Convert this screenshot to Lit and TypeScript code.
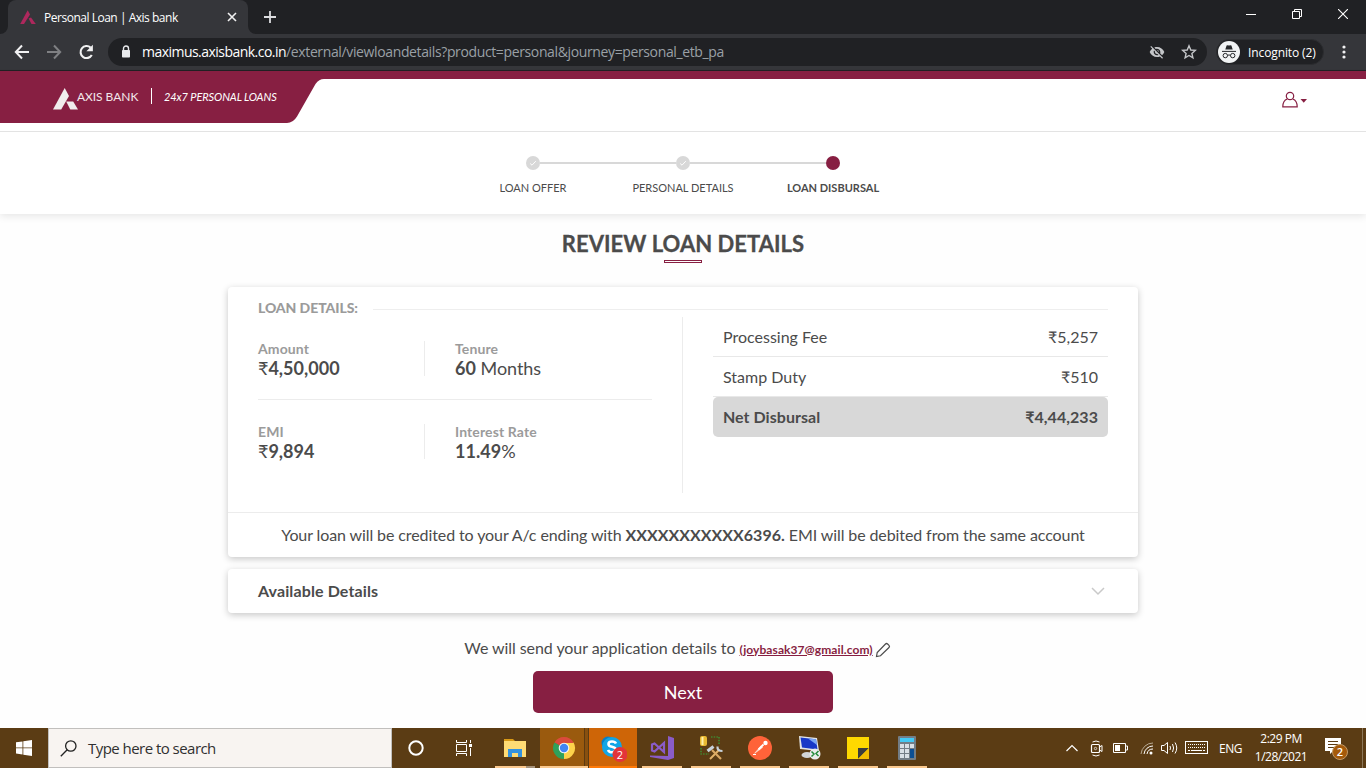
import { LitElement, html, css, svg } from "lit";
import { customElement } from "lit/decorators.js";
import { classMap } from "lit/directives/class-map.js";

@customElement("browser-chrome")
class BrowserChrome extends LitElement {
  static styles = css`
    :host { display: block; font-family: "Open Sans", sans-serif; color: #fff; }
    svg { display: block; flex: none; }
    .tabs { height: 34px; background: #202124; display: flex; align-items: center; }
    .corner { width: 8px; height: 34px; align-self: stretch; }
    .tab { width: 240px; height: 34px; box-sizing: border-box; background: #35363a; border-radius: 8px 8px 0 0; display: flex; align-items: center; padding: 0 10px 0 12px; font-size: 12px; }
    .tab-title { flex: 1; padding-left: 8px; letter-spacing: -0.48px; white-space: nowrap; }
    .plus { margin-left: 7px; }
    .grow { flex: 1; }
    .win { display: flex; gap: 36px; padding-right: 18px; align-items: center; margin-top: -6px; }
    .bar { height: 36px; background: #35363a; border-bottom: 1px solid #202124; display: flex; align-items: center; padding-left: 14px; }
    .fwd { margin-left: 16px; }
    .reload { margin-left: 16px; }
    .url { margin-left: 13px; width: 1099px; height: 28px; box-sizing: border-box; border-radius: 14px; background: #202124; display: flex; align-items: center; padding: 0 10px 0 12px; font-size: 14px; color: #9aa0a6; }
    .addr { margin: -1px 0 0 10px; white-space: nowrap; letter-spacing: -0.37px; }
    .host { color: #fff; letter-spacing: -0.53px; }
    .star { margin-left: 16px; }
    .incog { margin-left: 9px; width: 108px; height: 26px; box-sizing: border-box; border-radius: 13px; background: #202124; border: 1px solid #2c2d30; display: flex; align-items: center; padding-left: 1px; font-size: 12px; white-space: nowrap; }
    .incog-text { margin-left: 8px; letter-spacing: -0.11px; }
    .dots { margin-left: 17px; }
  `;
  render() {
    return html`
      <div class="tabs">
        <svg class="corner" viewBox="0 0 8 34"><path d="M8 26V34H0A8 8 0 0 0 8 26Z" fill="#35363a"/></svg>
        <div class="tab">
          <svg width="16" height="16" viewBox="0 0 16 16" fill="#ae285d"><path d="M7.7 1.2L10 5.6 4 15H.2Z"/><path d="M8.6 9.6L11 8.6 15.8 15H11.5Z"/></svg>
          <span class="tab-title">Personal Loan | Axis bank</span>
          <svg width="12" height="12" viewBox="0 0 12 12"><path d="M2 2L10 10M10 2L2 10" stroke="#f1f1f1" stroke-width="1.6"/></svg>
        </div>
        <svg width="8" height="34" viewBox="0 0 8 34"><path d="M0 26V34H8A8 8 0 0 1 0 26Z" fill="#35363a"/></svg>
        <svg class="plus" width="14" height="14" viewBox="0 0 14 14"><path d="M7 1V13M1 7H13" stroke="#dcdde0" stroke-width="1.8"/></svg>
        <span class="grow"></span>
        <div class="win">
          <svg width="10" height="10" viewBox="0 0 10 10"><path d="M0 5.5H10" stroke="#fff"/></svg>
          <svg width="10" height="10" viewBox="0 0 10 10"><path d="M.5 2.5H7.5V9.5H.5ZM2.5 2.5V.5H9.5V7.5H7.5" fill="none" stroke="#fff"/></svg>
          <svg width="10" height="10" viewBox="0 0 10 10"><path d="M0 0L10 10M10 0L0 10" stroke="#fff" stroke-width="1.1"/></svg>
        </div>
      </div>
      <div class="bar">
        <svg width="16" height="16" viewBox="0 0 16 16"><path d="M15 8H2M8 1.5L1.8 8L8 14.5" fill="none" stroke="#f1f1f2" stroke-width="2"/></svg>
        <svg class="fwd" width="16" height="16" viewBox="0 0 16 16"><path d="M1 8H14M8 1.5L14.2 8L8 14.5" fill="none" stroke="#7f8083" stroke-width="2"/></svg>
        <svg class="reload" width="17" height="16" viewBox="0 0 17 16"><path d="M13.8 11A6 6 0 1 1 12.6 3.6" fill="none" stroke="#f1f1f2" stroke-width="2.1"/><path d="M14.9 .8V7.2H8.4Z" fill="#f1f1f2"/></svg>
        <div class="url">
          <svg width="12" height="14" viewBox="0 0 12 14"><path d="M3.5 6V3.5A2.5 2.5 0 0 1 8.5 3.5V6" fill="none" stroke="#e8eaed" stroke-width="1.4"/><rect x="2" y="5" width="8" height="7.6" rx=".8" fill="#e8eaed"/></svg>
          <span class="addr"><span class="host">maximus.axisbank.co.in</span>/external/viewloandetails?product=personal&amp;journey=personal_etb_pa</span>
          <span class="grow"></span>
          <svg width="16" height="16" viewBox="0 0 24 24" fill="#c4c6c9"><path d="M12 7c2.76 0 5 2.24 5 5 0 .65-.13 1.26-.36 1.83l2.92 2.92c1.51-1.26 2.7-2.89 3.43-4.75-1.73-4.39-6-7.5-11-7.5-1.4 0-2.74.25-3.98.7l2.16 2.16C10.740 7.130 11.350 7 12 7zM2 4.270l2.280 2.280.46.46C3.080 8.300 1.780 10.020 1 12c1.730 4.390 6 7.500 11 7.500 1.550 0 3.030-.3 4.380-.84l.42.42L19.730 22 21 20.730 3.270 3 2 4.270zM7.530 9.800l1.550 1.550c-.05.21-.08.43-.08.65 0 1.660 1.340 3 3 3 .22 0 .44-.03.65-.08l1.550 1.550c-.67.33-1.410.53-2.200.53-2.760 0-5-2.240-5-5 0-.79.2-1.530.53-2.200zm4.310-.78l3.150 3.150.02-.16c0-1.660-1.340-3-3-3l-.17.01z"/></svg>
          <svg class="star" width="16" height="16" viewBox="0 0 16 16"><path d="M8 1.8L9.800 6 14.300 6.400 10.900 9.400 11.900 13.800 8 11.500 4.100 13.800 5.100 9.400 1.700 6.400 6.200 6Z" fill="none" stroke="#c4c6c9" stroke-width="1.4"/></svg>
        </div>
        <div class="incog">
          <svg width="22" height="22" viewBox="0 0 22 22"><circle cx="11" cy="11" r="11" fill="#f1f3f4"/><path d="M7.300 8.500L8.600 4.600Q9 4 11 4.500 13 4 13.400 4.600L14.700 8.500Z" fill="#26282b"/><path d="M4 10.400H18M9.500 14.400Q11 13.400 12.500 14.400" stroke="#26282b" fill="none"/><circle cx="7.300" cy="14.600" r="2.200" fill="none" stroke="#26282b"/><circle cx="14.700" cy="14.600" r="2.200" fill="none" stroke="#26282b"/></svg>
          <span class="incog-text">Incognito (2)</span>
        </div>
        <svg class="dots" width="6" height="16" viewBox="0 0 6 16" fill="#f1f1f2"><circle cx="3" cy="3" r="1.600"/><circle cx="3" cy="8" r="1.600"/><circle cx="3" cy="13" r="1.600"/></svg>
      </div>`;
  }
}

@customElement("bank-header")
class BankHeader extends LitElement {
  static styles = css`
    :host { display: block; font-family: Lato, sans-serif; }
    svg { display: block; flex: none; }
    .head { height: 60px; border-bottom: 1px solid #e3e3e3; display: grid; background: #fff; box-shadow: 0 1px 4px rgba(0,0,0,.06); }
    .shape, .content { grid-area: 1 / 1; }
    .content { height: 52px; display: flex; align-items: center; color: #fff; padding-left: 53px; }
    .logo { margin-top: 3px; }
    .brand { font-size: 12px; line-height: 16px; letter-spacing: -.05px; color: #f3e6eb; margin-left: -1px; width: 62px; white-space: nowrap; }
    .sep { width: 1px; height: 16px; background: #fff; margin-left: 12px; margin-top: -2px; }
    .tag { margin: -1px 0 0 12px; font-size: 11px; font-style: italic; letter-spacing: -.1px; white-space: nowrap; }
    .grow { flex: 1; }
    .user { margin: 6px 58px 0 0; }
  `;
  render() {
    return html`<div class="head">
      <svg class="shape" width="1366" height="52" viewBox="0 0 1366 52"><path d="M0 0H1366V8H324Q319 8 315.500 13L297 45.500Q293 52 287 52H0Z" fill="#871f42"/></svg>
      <div class="content">
        <svg class="logo" width="25" height="22" viewBox="0 0 25 22" fill="#f0ecec"><path d="M11.700 0L16 8 8.200 21.500H0Z"/><path d="M13.200 13.600H20.200L25 21.500H17.300Z"/></svg>
        <span class="brand">AXIS BANK</span><span class="sep"></span><span class="tag">24x7 PERSONAL LOANS</span>
        <span class="grow"></span>
        <svg class="user" width="26" height="18" viewBox="0 0 26 18"><circle cx="8" cy="5" r="3.700" fill="none" stroke="#871f42" stroke-width="1.200"/><path d="M5.300 8C2.200 9 .8 11.500 .8 15.800H15.200C15.200 11.500 13.800 9 10.700 8" fill="none" stroke="#871f42" stroke-width="1.200"/><path d="M18.500 8H25L21.750 11.700Z" fill="#871f42"/></svg>
      </div>
    </div>`;
  }
}

const STEPS = [
  { label: "LOAN OFFER", done: true },
  { label: "PERSONAL DETAILS", done: true },
  { label: "LOAN DISBURSAL", done: false },
];

@customElement("progress-steps")
class ProgressSteps extends LitElement {
  static styles = css`
    :host { display: block; height: 82px; background: #fff; box-shadow: 0 2px 8px rgba(0,0,0,.1); clip-path: inset(0 0 -14px 0); font-family: Lato, sans-serif; }
    svg { display: block; }
    .steps { display: flex; justify-content: center; padding-top: 24px; }
    .step { width: 150px; display: flex; flex-direction: column; align-items: center; font-size: 11px; color: #4b4b4b; }
    .row { width: 100%; display: grid; grid-template-columns: 1fr 14px 1fr; align-items: center; }
    .line { height: 2px; background: #d8d8d8; }
    .step:first-child .line:first-child, .step:last-child .line:last-child { visibility: hidden; }
    .label { margin-top: 11px; line-height: 14px; white-space: nowrap; }
    .active .label { font-weight: 700; }
  `;
  render() {
    return html`<div class="steps">${STEPS.map((s) => html`
      <div class=${classMap({ step: true, active: !s.done })}>
        <div class="row"><span class="line"></span>
          <svg width="14" height="14" viewBox="0 0 14 14"><circle cx="7" cy="7" r="7" fill=${s.done ? "#d8d8d8" : "#871f42"}/>${s.done ? svg`<path d="M4.200 7.500L6 9.200L9.800 5.200" fill="none" stroke="#fff"/>` : ""}</svg>
          <span class="line"></span></div>
        <span class="label">${s.label}</span>
      </div>`)}</div>`;
  }
}

@customElement("loan-review")
class LoanReview extends LitElement {
  static styles = css`
    :host { display: flex; flex-direction: column; align-items: center; font-family: Lato, sans-serif; color: #4b4b4b; font-size: 16px; font-variant-ligatures: none; }
    svg { display: block; flex: none; }
    h1 { margin: 16px 0 0; font-size: 22px; line-height: 28px; font-weight: 700; letter-spacing: .04px; white-space: nowrap; -webkit-text-stroke: .3px #4b4b4b; }
    .rule { width: 36px; height: 1px; border: 1px solid #871f42; margin-top: 2px; }
    .card { width: 910px; box-sizing: border-box; background: #fff; border-radius: 4px; box-shadow: 0 2px 7px rgba(0,0,0,.22); }
    .main { height: 270px; margin-top: 24px; }
    .title { display: flex; align-items: center; padding: 10px 30px 0; height: 20px; font-size: 14px; color: #9b9b9b; font-weight: 900; letter-spacing: -.08px; white-space: nowrap; }
    .title-line { flex: 1; height: 1px; background: #eee; margin: 5px 0 0 15px; }
    .cols { display: flex; height: 176px; padding: 0 30px; }
    .left { width: 394px; padding-right: 30px; border-right: 1px solid #ececec; }
    .pair { display: flex; height: 58px; padding-top: 24px; }
    .pair + .pair { border-top: 1px solid #ececec; }
    .fact { height: 35px; flex: none; }
    .fact:first-child { width: 166px; border-right: 1px solid #ececec; }
    .fact:last-child { padding-left: 30px; }
    .k { margin-top: -1px; font-size: 14px; line-height: 17px; font-weight: 700; color: #9b9b9b; letter-spacing: .12px; }
    .v { font-size: 18px; line-height: 22px; white-space: nowrap; letter-spacing: -.04px; }
    .b { font-weight: 700; letter-spacing: .02px; }
    .fees { margin-left: 30px; width: 395px; }
    .fee { display: flex; justify-content: space-between; align-items: center; height: 39px; padding: 0 10px; border-bottom: 1px solid #e8e8e8; }
    .net { height: 38px; padding-bottom: 2px; border: 0; border-radius: 5px; background: #d8d8d8; font-weight: 700; letter-spacing: .04px; }
    .note { margin-top: 19px; border-top: 1px solid #ececec; height: 44px; line-height: 44px; text-align: center; white-space: nowrap; letter-spacing: -.1px; }
    .more { margin-top: 12px; height: 44px; padding: 0 33px 0 30px; display: flex; align-items: center; justify-content: space-between; font-weight: 700; letter-spacing: .12px; }
    .more-text { margin-top: -2px; }
    .mail { display: flex; align-items: center; height: 22px; margin: 24px 0 0 -11px; line-height: 22px; white-space: nowrap; letter-spacing: -.06px; }
    .link { margin: 3px 0 0 4px; color: #871f42; font-size: 12px; font-weight: 700; letter-spacing: .08px; text-decoration: underline; }
    .pen { margin: 4px 0 0 2px; }
    .next { margin: 12px 0 0; width: 300px; height: 42px; border: 0; border-radius: 5px; background: #871f42; color: #fff; font: 18px/42px Lato, sans-serif; padding: 0; }
  `;
  render() {
    return html`
      <h1>REVIEW LOAN DETAILS</h1><div class="rule"></div>
      <section class="card main">
        <div class="title">LOAN DETAILS:<span class="title-line"></span></div>
        <div class="cols">
          <div class="left">
            <div class="pair">
              <div class="fact"><div class="k">Amount</div><div class="v">₹<span class="b">4,50,000</span></div></div>
              <div class="fact"><div class="k">Tenure</div><div class="v"><span class="b">60</span> Months</div></div>
            </div>
            <div class="pair">
              <div class="fact"><div class="k">EMI</div><div class="v">₹<span class="b">9,894</span></div></div>
              <div class="fact"><div class="k">Interest Rate</div><div class="v"><span class="b">11.49</span>%</div></div>
            </div>
          </div>
          <div class="fees">
            <div class="fee"><span>Processing Fee</span><span>₹5,257</span></div>
            <div class="fee"><span>Stamp Duty</span><span>₹510</span></div>
            <div class="fee net"><span>Net Disbursal</span><span>₹4,44,233</span></div>
          </div>
        </div>
        <div class="note">Your loan will be credited to your A/c ending with <span class="b">XXXXXXXXXXX6396.</span> EMI will be debited from the same account</div>
      </section>
      <section class="card more"><span class="more-text">Available Details</span>
        <svg width="14" height="10" viewBox="0 0 14 10"><path d="M1 2L7 8L13 2" fill="none" stroke="#c9c9c9" stroke-width="1.500"/></svg>
      </section>
      <div class="mail">We will send your application details to<span class="link">(joybasak37@gmail.com)</span>
        <svg class="pen" width="16" height="16" viewBox="0 0 16 16"><path d="M1.500 14.500L2.200 10.500 10.500 2Q11.500 1 12.600 2L14 3.400Q15 4.500 14 5.500L5.500 13.800Z" fill="none" stroke="#4b4b4b" stroke-width="1.200"/></svg>
      </div>
      <button class="next">Next</button>`;
  }
}

const APPS = [
  { cls: "explorer", icon: svg`<path d="M3 5H12L14 7V11H3Z" fill="#d99a16"/><path d="M3 7H25V23H3Z" fill="#ffdc75"/><path d="M7 15H21V23H17V19H11V23H7Z" fill="#3493df"/>` },
  { cls: "chrome", icon: svg`<path d="M14 14L4.470 8.500A11 11 0 0 1 23.530 8.500Z" fill="#db4a3d"/><path d="M14 14L23.530 8.500A11 11 0 0 1 14 25Z" fill="#fdd24b"/><path d="M14 14L14 25A11 11 0 0 1 4.470 8.500Z" fill="#2fa15b"/><path d="M14 9H23.800V8.700L18.300 16.500Z" fill="#fdd24b"/><circle cx="14" cy="14" r="5.300" fill="#f4f5f6"/><circle cx="14" cy="14" r="4.200" fill="#4285f4"/>` },
  { cls: "skype", icon: svg`<circle cx="9" cy="9" r="6.500" fill="#087fc4"/><circle cx="18" cy="18" r="6" fill="#087fc4"/><circle cx="13" cy="13" r="10" fill="#12a5e5"/><path d="M17 9.500Q16 7.500 13 7.500Q9.500 7.500 9.500 10Q9.500 12.200 13 12.800Q16.800 13.600 16.800 15.700Q16.500 18.300 13 18.300Q10 18.300 9 16" fill="none" stroke="#fff" stroke-width="2.600"/><circle cx="21" cy="20.500" r="7.500" fill="#e3343a"/>`, badge: "2" },
  { cls: "", icon: svg`<path d="M20 2L26 4V24L20 26L2 23V21.500L20 22Z" fill="#8a5cc8"/><path d="M4 10.500L6.500 9.500L16 18V9L6.500 17.500L4 16.500Z" fill="none" stroke="#8a5cc8" stroke-width="2.200"/>` },
  { cls: "", icon: svg`<path d="M4 14V20H12M14 3H22V10" fill="none" stroke="#36a63c" stroke-width="1.200" stroke-dasharray="1.500 1.200"/><rect x="3" y="2" width="7" height="10" rx="2" fill="#e9b931"/><rect x="4.500" y="3" width="2" height="8" fill="#fff0a9"/><path d="M13 25L22 16" stroke="#e4b46a" stroke-width="2"/><path d="M15 16L24 25" stroke="#d9a864" stroke-width="2.200"/><path d="M10.500 17L16.500 12.500" stroke="#c8d2da" stroke-width="3.200"/><path d="M20.500 12.500Q20 17 25.500 17" fill="none" stroke="#c8d2da" stroke-width="2.200"/>` },
  { cls: "", icon: svg`<circle cx="14" cy="14" r="12" fill="#ff6339"/><path d="M8 19.500L15 11.500L17 13.500L9 19.500Z" fill="#ffd8ca"/><path d="M12.500 15.500L17.500 10.500" stroke="#fff" stroke-width="1.800"/><circle cx="19.500" cy="9" r="2.200" fill="#fff"/><path d="M7 20.500H10" stroke="#fff"/>` },
  { cls: "", icon: svg`<path d="M4 2L22 4L24 17L5 15Z" fill="#e2e4e5"/><path d="M5.500 3.500L21 5.300L22.500 15.500L7 13.500Z" fill="#1838c7"/><path d="M13 4.500L21 5.300L22 11Z" fill="#7aa5f3"/><ellipse cx="12" cy="21" rx="5.500" ry="3" fill="#d2d5d6"/><circle cx="20" cy="20" r="5.500" fill="#e9ecec"/><path d="M16.500 17.500L19 20L16.500 22.500M23.500 17L21 19.500L23.500 22" fill="none" stroke="#248b3b" stroke-width="1.500"/>` },
  { cls: "", icon: svg`<path d="M3 3H25V25H3Z" fill="#ffd800"/><path d="M14 14H25L14 25Z" fill="#3c3c3c"/><path d="M25 14V25H14Z" fill="#f3bd00"/>` },
  { cls: "", icon: svg`<rect x="5" y="2" width="18" height="24" rx="1" fill="#727d86"/><rect x="7" y="4" width="14" height="4" fill="#42c9f4"/><path d="M7 10H11V14H7ZM12 10H16V14H12ZM17 10H21V14H17ZM7 15H11V19H7ZM12 15H16V19H12ZM7 20H11V24H7ZM12 20H16V24H12Z" fill="#d8e0e6"/><path d="M17 15H21V24H17Z" fill="#0b4f94"/>` },
];

@customElement("task-bar")
class TaskBar extends LitElement {
  static styles = css`
    :host { display: flex; height: 40px; background: #5b3c14; font-family: "Open Sans", sans-serif; color: #fff; }
    svg { display: block; flex: none; }
    .start { width: 48px; display: grid; place-items: center; }
    .search { width: 344px; box-sizing: border-box; border: 1px solid #c1bfbd; background: #f8f4f1; display: flex; align-items: center; padding-left: 11px; color: #303030; font-size: 15px; }
    .placeholder { margin-left: 11px; letter-spacing: -.54px; white-space: nowrap; }
    .tool { width: 48px; display: grid; place-items: center; }
    .apps { display: flex; gap: 1px; margin-left: 3px; }
    .app { width: 48px; height: 40px; box-sizing: border-box; display: grid; place-items: center; position: relative; background: linear-gradient(#fbc98e, #fbc98e) 4px 38px / 40px 2px no-repeat; }
    .chrome { background: linear-gradient(#fbc98e, #fbc98e) 0 38px / 48px 2px no-repeat, linear-gradient(90deg, #9a5a0e 44px, #5d3a10 44px 45px, #88500f 45px); }
    .skype { background: linear-gradient(#ff7a08, #ff7a08) 0 38px / 48px 2px no-repeat, #ce6507; }
    .explorer { background: linear-gradient(90deg, #fbc98e 31px, #a5927a 31px) 4px 38px / 40px 2px no-repeat; }
    .badge { position: absolute; left: 27px; top: 19px; width: 8px; text-align: center; font-size: 11px; line-height: 15px; }
    .grow { flex: 1; }
    .tray { display: flex; align-items: center; white-space: nowrap; }
    .lang { width: 24px; margin-left: 11px; font-size: 12px; letter-spacing: -.5px; }
    .clock { width: 58px; margin-left: 9px; text-align: center; font-size: 12px; line-height: 18px; letter-spacing: -.5px; display: flex; flex-direction: column; align-items: center; }
    .action { margin-left: 14px; width: 26px; position: relative; }
    .count { position: absolute; left: 10px; top: 10px; width: 12px; text-align: center; font-size: 11px; line-height: 13px; font-weight: 600; }
    .edge { width: 1px; height: 40px; background: #8b7658; margin: 0 3px 0 12px; }
    .cam { margin-left: 12px; } .bat { margin-left: 9px; } .wifi { margin-left: 12px; } .vol { margin-left: 8px; } .kb { margin-left: 7px; }
  `;
  render() {
    return html`
      <div class="start"><svg width="16" height="16" viewBox="0 0 16 16" fill="#fff"><path d="M0 2.300L6.500 1.400V7.500H0ZM7.300 1.300L16 0V7.500H7.300ZM0 8.300H6.500V14.500L0 13.600ZM7.300 8.300H16V16L7.300 14.700Z"/></svg></div>
      <div class="search"><svg width="17" height="17" viewBox="0 0 17 17"><circle cx="10.800" cy="6" r="5.200" fill="none" stroke="#222" stroke-width="1.300"/><path d="M7.200 9.700L.8 16.200" stroke="#222" stroke-width="1.300"/></svg><span class="placeholder">Type here to search</span></div>
      <div class="tool"><svg width="16" height="16" viewBox="0 0 16 16"><circle cx="8" cy="8" r="6.700" fill="none" stroke="#fff" stroke-width="2"/></svg></div>
      <div class="tool"><svg width="16" height="16" viewBox="0 0 16 16"><path d="M.5 0V2.500H10.500V0M.5 4.500H10.500V11.500H.5ZM.5 16V13.500H10.500V16M14.500 0V3M14.500 8V16" fill="none" stroke="#fff"/><rect x="13" y="4" width="3" height="3" fill="#fff"/></svg></div>
      <div class="apps">${APPS.map((a) => html`<div class="app ${a.cls}"><svg width="28" height="28" viewBox="0 0 28 28">${a.icon}</svg>${a.badge ? html`<span class="badge">${a.badge}</span>` : ""}</div>`)}</div>
      <span class="grow"></span>
      <div class="tray">
        <svg width="12" height="8" viewBox="0 0 12 8"><path d="M.5 7L6 1.500L11.500 7" fill="none" stroke="#fff" stroke-width="1.200"/></svg>
        <svg class="cam" width="14" height="17" viewBox="0 0 14 17"><path d="M2.500 2Q6 0 9.500 2M2.500 15Q6 17 9.500 15" fill="none" stroke="#fff"/><rect x="1.500" y="4.500" width="8" height="8" rx="1" fill="none" stroke="#fff" stroke-width="1.200"/><circle cx="5.500" cy="8.500" r="1.200" fill="none" stroke="#fff" stroke-width=".7"/><path d="M9.500 7L12 5.500V11.500L9.500 10" fill="none" stroke="#fff"/></svg>
        <svg class="bat" width="15" height="10" viewBox="0 0 15 10"><path d="M.5 .5H12.500V9.500H.5ZM13 3H14.500V7H13" fill="none" stroke="#fff"/><rect x="2" y="2" width="5" height="6" fill="#fff"/></svg>
        <svg class="wifi" width="13" height="14" viewBox="0 0 13 14" fill="none"><path d="M1 13A12 12 0 0 1 13 2" stroke="#b9aa94"/><path d="M4 13A9 9 0 0 1 13 5M7 13A6 6 0 0 1 13 8" stroke="#fff"/><circle cx="11" cy="12" r="1.500" fill="#fff"/></svg>
        <svg class="vol" width="17" height="14" viewBox="0 0 17 14"><path d="M.5 4.500H3L6.500 1.500V12.500L3 9.500H.5ZM9 5Q10 7 9 9M11.500 3Q13.700 7 11.500 11M14 1.500Q17.500 7 14 12.500" fill="none" stroke="#fff"/></svg>
        <svg class="kb" width="23" height="14" viewBox="0 0 23 14"><rect x=".5" y=".5" width="22" height="12" fill="none" stroke="#fff"/><path d="M3 3.500H20M3 6.500H20" stroke="#fff" stroke-dasharray="1 1"/><path d="M3 9.500H20" stroke="#fff" stroke-dasharray="2 1 11 1"/></svg>
        <span class="lang">ENG</span>
        <div class="clock"><span>2:29 PM</span><span>1/28/2021</span></div>
        <div class="action"><svg width="26" height="26" viewBox="0 0 26 26"><path d="M1 3H17V16H9L6 19V16H1Z" fill="#fff"/><path d="M4 6.500H14M4 9.500H14M4 12.500H10" stroke="#5b3c14"/><circle cx="16" cy="17" r="7.500" fill="#a55a0a" stroke="#c39a68"/></svg><span class="count">2</span></div>
        <span class="edge"></span>
      </div>`;
  }
}

@customElement("app-root")
class AppRoot extends LitElement {
  static styles = css`
    :host { display: flex; flex-direction: column; width: 1366px; height: 768px; overflow: hidden; background: #fefefe; }
    loan-review { flex: 1; min-height: 0; }
  `;
  render() {
    return html`<browser-chrome></browser-chrome><bank-header></bank-header><progress-steps></progress-steps><loan-review></loan-review><task-bar></task-bar>`;
  }
}
